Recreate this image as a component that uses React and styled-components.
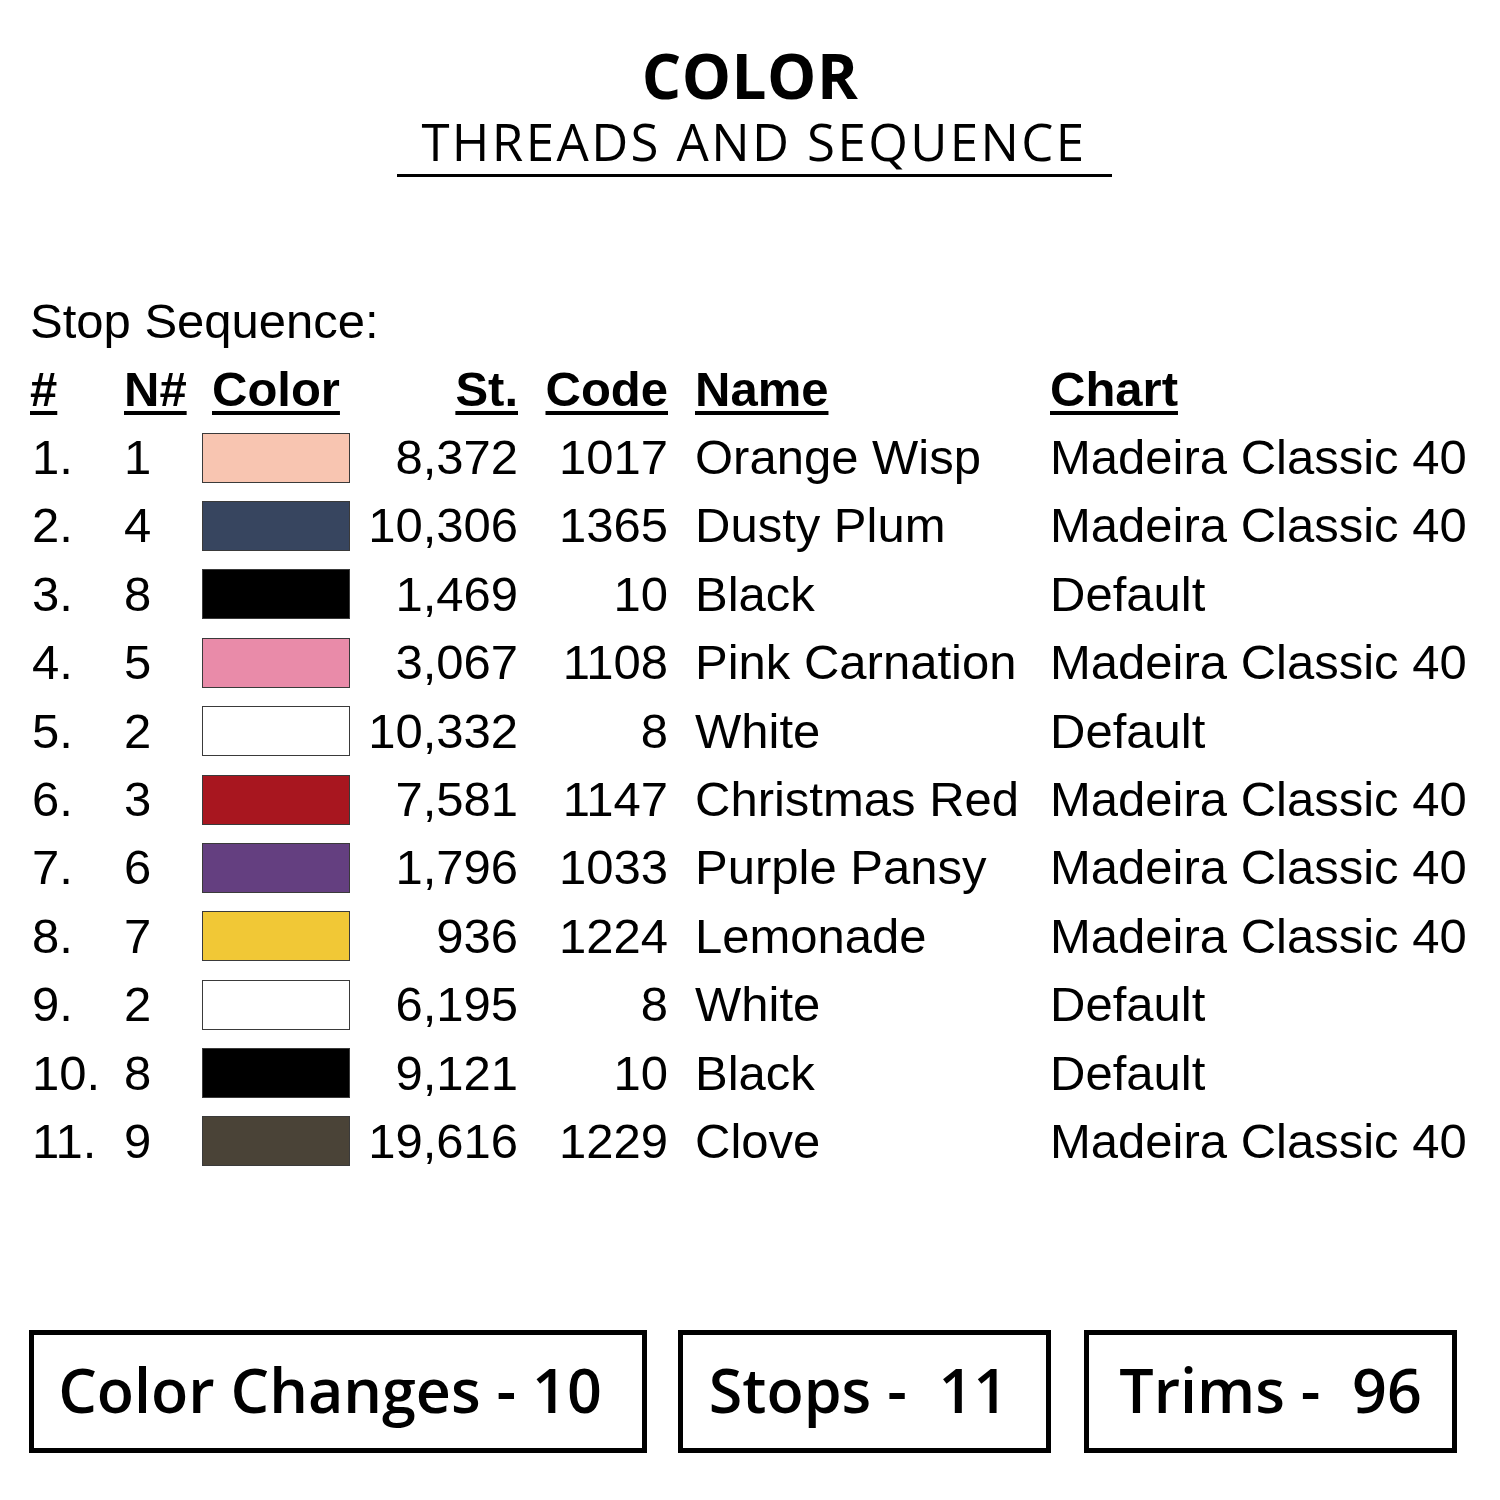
import React from "react";
import styled, { createGlobalStyle } from "styled-components";

const Global = createGlobalStyle`
  html, body { margin: 0; padding: 0; background: #fff; }
  body { width: 1500px; height: 1500px; overflow: hidden; }
`;

const Page = styled.div`
  width: 1500px;
  height: 1500px;
  box-sizing: border-box;
  display: flex;
  flex-direction: column;
  background: #fff;
  color: #000;
`;

const Header = styled.header`
  display: flex;
  flex-direction: column;
  align-items: center;
  padding-top: 43px;
`;

const Title = styled.h1`
  margin: 0;
  font-family: "Open Sans", "Liberation Sans", sans-serif;
  font-weight: 700;
  font-size: 62px;
  line-height: 64px;
  letter-spacing: 0.5px;
`;

const Subtitle = styled.h2`
  margin: 2px 0 0 8px;
  width: 715px;
  text-align: center;
  font-family: "Open Sans", "Liberation Sans", sans-serif;
  font-weight: 400;
  font-size: 51px;
  line-height: 64px;
  letter-spacing: 2.4px;
  padding-bottom: 1px;
  border-bottom: 3px solid #000;
`;

const Section = styled.section`
  margin-top: 110px;
  padding-left: 30px;
  font-family: "Liberation Sans", Arial, sans-serif;
  font-size: 49px;
`;

const Caption = styled.div`
  height: 68px;
  line-height: 68px;
`;

const Grid = styled.div`
  display: grid;
  grid-template-columns: 94px 78px 148px 168px 150px 382px auto;
  grid-auto-rows: 68.4px;
  align-items: center;
  line-height: 1;
`;

const Cell = styled.div`
  white-space: nowrap;
  text-align: ${(p) => (p.$right ? "right" : "left")};
  padding-left: ${(p) => p.$pl || 0}px;
`;

const HeadCell = styled(Cell)`
  font-weight: 700;
  & > span {
    text-decoration: underline;
    text-decoration-thickness: 4px;
    text-underline-offset: 5px;
  }
`;

const Swatch = styled.div`
  width: 148px;
  height: 50px;
  box-sizing: border-box;
  border: 1.5px solid #3a3a3a;
  background: ${(p) => p.$color};
`;

const Footer = styled.footer`
  margin-top: auto;
  margin-bottom: 47px;
  padding-left: 29px;
  display: flex;
  gap: 31px;
`;

const StatBox = styled.div`
  box-sizing: border-box;
  width: ${(p) => p.$w}px;
  height: 123px;
  border: 5px solid #000;
  display: flex;
  align-items: center;
  justify-content: center;
  font-family: "Open Sans", "Liberation Sans", sans-serif;
  font-weight: 600;
  font-size: ${(p) => p.$fs || 61}px;
  white-space: pre;
  padding-bottom: 4px;
  padding-right: ${(p) => p.$pr || 0}px;
  margin-left: ${(p) => p.$ml || 0}px;
`;

const rows = [
  ["1.", "1", "#F8C5B1", "8,372", "1017", "Orange Wisp", "Madeira Classic 40"],
  ["2.", "4", "#37455F", "10,306", "1365", "Dusty Plum", "Madeira Classic 40"],
  ["3.", "8", "#000000", "1,469", "10", "Black", "Default"],
  ["4.", "5", "#E98BA9", "3,067", "1108", "Pink Carnation", "Madeira Classic 40"],
  ["5.", "2", "#FFFFFF", "10,332", "8", "White", "Default"],
  ["6.", "3", "#A8161F", "7,581", "1147", "Christmas Red", "Madeira Classic 40"],
  ["7.", "6", "#643F80", "1,796", "1033", "Purple Pansy", "Madeira Classic 40"],
  ["8.", "7", "#F1C836", "936", "1224", "Lemonade", "Madeira Classic 40"],
  ["9.", "2", "#FFFFFF", "6,195", "8", "White", "Default"],
  ["10.", "8", "#000000", "9,121", "10", "Black", "Default"],
  ["11.", "9", "#4A4337", "19,616", "1229", "Clove", "Madeira Classic 40"],
];

export default function App() {
  return (
    <Page>
      <Global />
      <Header>
        <Title>COLOR</Title>
        <Subtitle>THREADS AND SEQUENCE</Subtitle>
      </Header>
      <Section>
        <Caption>Stop Sequence:</Caption>
        <Grid>
          <HeadCell><span>#</span></HeadCell>
          <HeadCell><span>N#</span></HeadCell>
          <HeadCell $pl={10}><span>Color</span></HeadCell>
          <HeadCell $right><span>St.</span></HeadCell>
          <HeadCell $right><span>Code</span></HeadCell>
          <HeadCell $pl={27}><span>Name</span></HeadCell>
          <HeadCell><span>Chart</span></HeadCell>
          {rows.map((r, i) => (
            <React.Fragment key={i}>
              <Cell $pl={2}>{r[0]}</Cell>
              <Cell>{r[1]}</Cell>
              <Swatch $color={r[2]} />
              <Cell $right>{r[3]}</Cell>
              <Cell $right>{r[4]}</Cell>
              <Cell $pl={27}>{r[5]}</Cell>
              <Cell>{r[6]}</Cell>
            </React.Fragment>
          ))}
        </Grid>
      </Section>
      <Footer>
        <StatBox $w={618} $pr={16}>Color Changes - 10</StatBox>
        <StatBox $w={373} $pr={12}>Stops -  11</StatBox>
        <StatBox $w={373} $ml={2}>Trims -  96</StatBox>
      </Footer>
    </Page>
  );
}
